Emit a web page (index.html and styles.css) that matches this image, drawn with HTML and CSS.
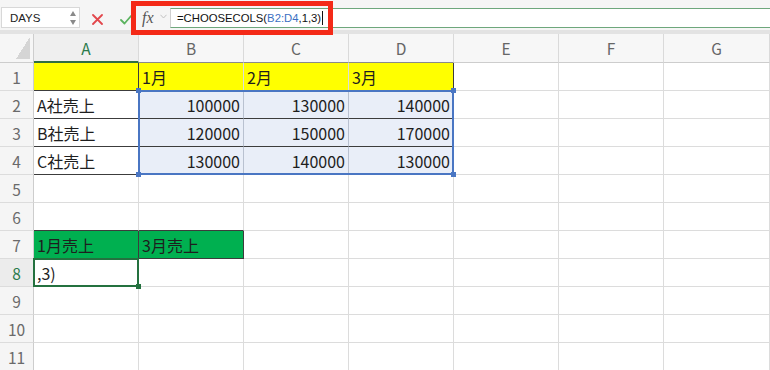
FILE: index.html
```html
<!DOCTYPE html>
<html lang="ja">
<head>
<meta charset="utf-8">
<title>Sheet</title>
<link rel="stylesheet" href="styles.css">
</head>
<body>
<div class="app">
  <div class="fbar">
    <div class="namebox">
      <span class="nb-text">DAYS</span>
      <svg class="spin" width="6" height="14" viewBox="0 0 6 14"><path d="M3 0 L6 5 L0 5 Z" fill="#8a8a8a"/><path d="M0 9 L6 9 L3 14 Z" fill="#8a8a8a"/></svg>
    </div>
    <svg class="ic-x" width="11" height="11" viewBox="0 0 11 11"><path d="M1 1 L10 10 M10 1 L1 10" stroke="#e2474c" stroke-width="1.8" fill="none" stroke-linecap="round"/></svg>
    <svg class="ic-ok" width="12" height="10" viewBox="0 0 12 10"><path d="M1 5 L4.5 8.5 L11 1" stroke="#5bb35f" stroke-width="1.8" fill="none" stroke-linecap="round" stroke-linejoin="round"/></svg>
    <span class="fx">fx</span>
    <svg class="chev" width="7" height="5" viewBox="0 0 7 5"><path d="M0.5 0.8 L3.5 4 L6.5 0.8" stroke="#c2c2c2" stroke-width="1" fill="none"/></svg>
    <div class="finput">=CHOOSECOLS(<span class="ref">B2:D4</span>,1,3)<span class="caret"></span></div>
    <div class="annot"></div>
  </div>
  <div class="band"></div>
  <div class="wrap">
    <div class="sheet">
      <!-- header -->
      <div class="corner"><span class="tri"></span></div>
      <div class="ch ch-sel">A</div>
      <div class="ch ch-t">B</div>
      <div class="ch ch-t">C</div>
      <div class="ch ch-t">D</div>
      <div class="ch">E</div>
      <div class="ch">F</div>
      <div class="ch">G</div>
      <!-- row 1 -->
      <div class="rh">1</div>
      <div class="c y bb br"></div>
      <div class="c y bb">1月</div>
      <div class="c y bb">2月</div>
      <div class="c y bb br">3月</div>
      <div class="c"></div>
      <div class="c"></div>
      <div class="c"></div>
      <!-- row 2 -->
      <div class="rh">2</div>
      <div class="c bb br">A社売上</div>
      <div class="c s bb sv num">100000</div>
      <div class="c s bb sv num">130000</div>
      <div class="c s bb br num">140000</div>
      <div class="c"></div>
      <div class="c"></div>
      <div class="c"></div>
      <!-- row 3 -->
      <div class="rh">3</div>
      <div class="c bb br">B社売上</div>
      <div class="c s bb sv num">120000</div>
      <div class="c s bb sv num">150000</div>
      <div class="c s bb br num">170000</div>
      <div class="c"></div>
      <div class="c"></div>
      <div class="c"></div>
      <!-- row 4 -->
      <div class="rh">4</div>
      <div class="c bb br">C社売上</div>
      <div class="c s bb sv num">130000</div>
      <div class="c s bb sv num">140000</div>
      <div class="c s bb br num">130000</div>
      <div class="c"></div>
      <div class="c"></div>
      <div class="c"></div>
      <!-- row 5 -->
      <div class="rh">5</div>
      <div class="c"></div><div class="c"></div><div class="c"></div><div class="c"></div><div class="c"></div><div class="c"></div><div class="c"></div>
      <!-- row 6 -->
      <div class="rh">6</div>
      <div class="c bb"></div><div class="c bb"></div><div class="c"></div><div class="c"></div><div class="c"></div><div class="c"></div><div class="c"></div>
      <!-- row 7 -->
      <div class="rh">7</div>
      <div class="c g bb br">1月売上</div>
      <div class="c g bb br">3月売上</div>
      <div class="c"></div><div class="c"></div><div class="c"></div><div class="c"></div><div class="c"></div>
      <!-- row 8 -->
      <div class="rh rh-sel">8</div>
      <div class="c">,3)</div>
      <div class="c"></div><div class="c"></div><div class="c"></div><div class="c"></div><div class="c"></div><div class="c"></div>
      <!-- row 9 -->
      <div class="rh">9</div>
      <div class="c"></div><div class="c"></div><div class="c"></div><div class="c"></div><div class="c"></div><div class="c"></div><div class="c"></div>
      <!-- row 10 -->
      <div class="rh">10</div>
      <div class="c"></div><div class="c"></div><div class="c"></div><div class="c"></div><div class="c"></div><div class="c"></div><div class="c"></div>
      <!-- row 11 -->
      <div class="rh">11</div>
      <div class="c"></div><div class="c"></div><div class="c"></div><div class="c"></div><div class="c"></div><div class="c"></div><div class="c"></div>
    </div>
    <div class="ovl">
      <div class="range">
        <span class="h h-tl"></span><span class="h h-tr"></span><span class="h h-bl"></span><span class="h h-br"></span>
      </div>
      <div class="active"><span class="ah"></span></div>
    </div>
  </div>
</div>
</body>
</html>
```

FILE: styles.css
```css
html, body {
  margin: 0;
  padding: 0;
  background: #ffffff;
  overflow: hidden;
}
.app {
  width: 770px;
  height: 370px;
  overflow: hidden;
  font-family: "Noto Sans CJK JP", "Noto Sans", sans-serif;
}
.fbar {
  position: relative;
  height: 30px;
  display: flex;
  align-items: flex-end;
  padding-bottom: 2px;
  box-sizing: border-box;
  background: #f5f5f5;
}
.namebox {
  margin-left: 1px;
  width: 79px;
  height: 21px;
  box-sizing: border-box;
  background: #ffffff;
  border: 1px solid #d8d8d8;
  display: flex;
  align-items: center;
  justify-content: space-between;
  padding: 0 3px 0 8px;
  font-family: "Liberation Sans", Arial, sans-serif;
  font-size: 11.5px;
  color: #222;
}
.spin { display: block; }
.ic-x { margin-left: 12px; margin-bottom: 3px; display: block; }
.ic-ok { margin-left: 17px; margin-bottom: 3px; display: block; }
.fx {
  margin-left: 10px;
  width: 15px;
  font-family: "Liberation Serif", "DejaVu Serif", serif;
  font-style: italic;
  font-size: 16px;
  line-height: 20px;
  color: #555;
}
.chev { margin-left: 3px; margin-bottom: 9px; display: block; }
.finput {
  margin-left: 3px;
  flex: 1;
  height: 20px;
  box-sizing: border-box;
  background: #ffffff;
  border-top: 1px solid #6ea77c;
  border-bottom: 1px solid #6ea77c;
  border-left: 1px solid #cfcfcf;
  padding-left: 6px;
  display: flex;
  align-items: center;
  font-family: "Liberation Sans", Arial, sans-serif;
  font-size: 11.3px;
  color: #111;
  white-space: pre;
}
.ref { color: #3a6fc2; }
.caret {
  display: inline-block;
  width: 1px;
  height: 14px;
  background: #111;
  margin-left: 1px;
}
.annot {
  position: absolute;
  left: 131px;
  top: 1px;
  width: 202px;
  height: 34px;
  box-sizing: border-box;
  border: 5px solid #f42a18;
  z-index: 5;
}
.band {
  height: 4px;
  background: #e3e3e3;
}
.wrap {
  display: grid;
}
.sheet, .ovl {
  grid-area: 1 / 1;
  display: grid;
  grid-template-columns: 34px repeat(6, 105px) 1fr;
  grid-template-rows: 29px repeat(11, 28px);
}
.ovl { pointer-events: none; }
.corner {
  background: #f6f6f6;
  border-right: 1px solid #cdcdcd;
  border-bottom: 1px solid #cdcdcd;
  display: flex;
  align-items: flex-end;
  justify-content: flex-end;
  padding: 0 3px 3px 0;
}
.tri {
  width: 14px;
  height: 22px;
  background: linear-gradient(to bottom right, transparent 50%, #d5d5d5 50%);
}
.ch {
  background: #f7f7f7;
  border-right: 1px solid #dadada;
  border-bottom: 1px solid #cdcdcd;
  display: flex;
  align-items: center;
  justify-content: center;
  font-size: 15.5px;
  color: #666;
}
.ch-t { border-bottom-color: #8a8a8a; }
.ch-sel {
  background: #efefef;
  color: #2a7a4a;
  border-bottom: 2px solid #2f6e42;
}
.rh {
  background: #f5f5f5;
  border-right: 1px solid #cdcdcd;
  border-bottom: 1px solid #dcdcdc;
  display: flex;
  align-items: center;
  justify-content: center;
  font-size: 15.5px;
  color: #6a6a6a;
}
.rh-sel { color: #2a7a4a; background: #ececec; }
.c {
  border-right: 1px solid #dcdcdc;
  border-bottom: 1px solid #dcdcdc;
  display: flex;
  align-items: center;
  padding: 0 3px;
  font-size: 16px;
  color: #1e1e1e;
  white-space: nowrap;
  overflow: hidden;
}
.num { justify-content: flex-end; }
.y { background: #ffff00; }
.g { background: #00b050; }
.s { background: #e9eef8; }
.bb { border-bottom-color: #3c3c3c; }
.br { border-right-color: #3c3c3c; }
.sv { border-right-color: #b9c1d0; }
.range {
  grid-column: 3 / 6;
  grid-row: 3 / 6;
  margin: -1px 0 0 -1px;
  border: 2px solid #4a76c3;
  position: relative;
}
.h {
  position: absolute;
  width: 5px;
  height: 5px;
  background: #4a76c3;
}
.h-tl { top: -4px; left: -4px; }
.h-tr { top: -4px; right: -4px; }
.h-bl { bottom: -4px; left: -4px; }
.h-br { bottom: -4px; right: -4px; }
.active {
  grid-column: 2 / 3;
  grid-row: 9 / 10;
  margin: -1px 0 0 -1px;
  border: 2px solid #24713f;
  position: relative;
}
.ah {
  position: absolute;
  right: -4px;
  bottom: -4px;
  width: 5px;
  height: 5px;
  background: #24713f;
}
```
